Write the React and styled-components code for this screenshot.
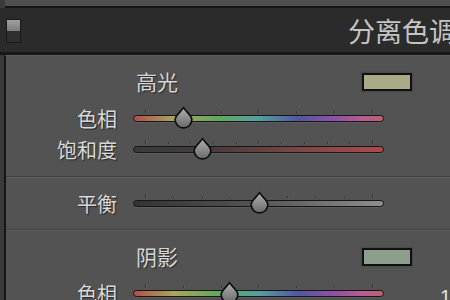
import React from 'react'
import styled, { createGlobalStyle } from 'styled-components'

const GlobalStyle = createGlobalStyle`
  html, body {
    margin: 0;
    padding: 0;
    background: #3a3a3a;
  }
  body {
    font-family: "Noto Sans CJK SC", "Noto Sans", sans-serif;
  }
`

const Screen = styled.div`
  width: 450px;
  height: 300px;
  overflow: hidden;
  background: #3a3a3a;
  display: flex;
  flex-direction: column;
`

const TopStrip = styled.div`
  height: 6px;
  margin-left: 5px;
  background: #4f4f4f;
  border-bottom: 2px solid #151515;
  flex-shrink: 0;
`

const Header = styled.header`
  height: 44px;
  flex-shrink: 0;
  display: flex;
  align-items: center;
  padding-left: 6px;
  background: #2b2b2b;
  border-bottom: 3px solid #181818;
`

const Toggle = styled.div`
  width: 13px;
  height: 22px;
  border: 1px solid #1a1a1a;
  display: flex;
  flex-direction: column;
  margin-top: 2px;
  & > span:first-child {
    flex: 1;
    background: linear-gradient(#a0a0a0, #7c7c7c);
  }
  & > span:last-child {
    flex: 1;
    background: #2f2f2f;
  }
`

const Title = styled.h1`
  margin: 0 -6px 0 auto;
  flex-shrink: 0;
  white-space: nowrap;
  font-size: 27px;
  font-weight: 400;
  color: #c4c4c4;
`

const Panel = styled.main`
  flex: 1;
  margin-left: 4px;
  background: #535353;
  border-left: 2px solid #161616;
  border-top: 1px solid #5c5c5c;
`

const Section = styled.section`
  padding: ${p => p.$top}px 0 ${p => p.$bottom}px;
  border-bottom: ${p => (p.$last ? 'none' : '1px solid #414141')};
  box-shadow: ${p => (p.$last ? 'none' : '0 1px 0 #5e5e5e')};
  margin-bottom: ${p => (p.$last ? 0 : 1)}px;
`

const HeadRow = styled.div`
  height: 24px;
  display: flex;
  align-items: center;
  padding-left: 130px;
  margin-bottom: 10px;
`

const Heading = styled.h2`
  margin: 0;
  font-size: 21px;
  font-weight: 400;
  color: #d6d6d6;
  text-shadow: 1px 1px 1px #2a2a2a;
`

const Swatch = styled.div`
  width: 46px;
  height: 14px;
  margin: 2px 38px 0 auto;
  background: ${p => p.$color};
  border: 2px solid #111;
  box-shadow: 0 0 1px 1px #4a4a4a;
`

const Row = styled.div`
  height: 31px;
  display: grid;
  grid-template-columns: 111px 251px 1fr;
  column-gap: 16px;
  align-items: center;
`

const Label = styled.span`
  text-align: right;
  font-size: 20px;
  color: #d8d8d8;
  text-shadow: 1px 1px 1px #262626;
  line-height: 1;
`

const Value = styled.span`
  padding-left: 40px;
  font-family: "Liberation Sans", sans-serif;
  font-size: 20px;
  color: #e0e0e0;
  line-height: 1;
  margin-top: 6px;
`

const SliderBox = styled.div`
  position: relative;
  height: 31px;
  display: flex;
  flex-direction: column;
  justify-content: center;
`

const Ticks = styled.div`
  height: 4px;
  display: flex;
  justify-content: space-between;
  align-items: flex-end;
  padding: 0 11px 0 12px;
  margin-bottom: 2px;
  margin-top: -6px;
`

const Tick = styled.i`
  width: 1px;
  height: ${p => (p.$major ? 4 : 2)}px;
  background: #363636;
  box-shadow: 1px 0 0 #5f5f5f;
`

const Track = styled.div`
  height: 5px;
  border: 1px solid #161616;
  border-radius: 4px;
  background: ${p => p.$fill};
  box-shadow: 0 1px 0 #5d5d5d;
`

const Thumb = styled.svg`
  position: absolute;
  top: 3px;
  width: 21px;
  height: 23px;
  margin-left: -10.5px;
  overflow: visible;
`

const fills = {
  hue: 'linear-gradient(90deg, hsl(0,38%,50%) 0%, hsl(55,32%,52%) 16%, hsl(120,30%,52%) 34%, hsl(180,30%,48%) 50%, hsl(235,34%,48%) 66%, hsl(285,34%,48%) 80%, hsl(325,38%,54%) 92%, hsl(350,42%,56%) 100%)',
  sat: 'linear-gradient(90deg, #3b3b3b 0%, #463b3b 30%, #844646 70%, #ad4a4a 100%)',
  bal: 'linear-gradient(90deg, #333 0%, #555 50%, #8e8e8e 100%)'
}

function Slider ({ kind, ticks, value }) {
  const marks = Array.from({ length: ticks }, (_, i) => i)
  const mid = (ticks - 1) / 2
  const left = 12 + value * 228
  return (
    <SliderBox>
      <Ticks>
        {marks.map(i => (
          <Tick key={i} $major={i === 0 || i === ticks - 1 || i === mid} />
        ))}
      </Ticks>
      <Track $fill={fills[kind]} />
      <Thumb viewBox='0 0 20 22' style={{ left }}>
        <defs>
          <linearGradient id='thumbFill' x1='0' y1='0' x2='0' y2='1'>
            <stop offset='0' stopColor='#b0b0b0' />
            <stop offset='1' stopColor='#6a6a6a' />
          </linearGradient>
        </defs>
        <path
          d='M10 1.5 C12 5 18 9 18 13 A8 8 0 0 1 2 13 C2 9 8 5 10 1.5 Z'
          fill='url(#thumbFill)'
          stroke='#0e0e0e'
          strokeWidth='1.6'
          strokeLinejoin='round'
        />
      </Thumb>
    </SliderBox>
  )
}

function SliderRow ({ label, kind, ticks, value, readout }) {
  return (
    <Row>
      <Label>{label}</Label>
      <Slider kind={kind} ticks={ticks} value={value} />
      {readout ? <Value>{readout}</Value> : <span />}
    </Row>
  )
}

export default function App () {
  return (
    <Screen>
      <GlobalStyle />
      <TopStrip />
      <Header>
        <Toggle><span /><span /></Toggle>
        <Title>分离色调</Title>
      </Header>
      <Panel>
        <Section $top={13} $bottom={11}>
          <HeadRow>
            <Heading>高光</Heading>
            <Swatch $color='#aaaa86' />
          </HeadRow>
          <SliderRow label='色相' kind='hue' ticks={7} value={0.17} />
          <SliderRow label='饱和度' kind='sat' ticks={11} value={0.25} />
        </Section>
        <Section $top={10} $bottom={10}>
          <SliderRow label='平衡' kind='bal' ticks={9} value={0.5} />
        </Section>
        <Section $top={13} $bottom={0} $last>
          <HeadRow>
            <Heading>阴影</Heading>
            <Swatch $color='#8d9e8d' />
          </HeadRow>
          <SliderRow label='色相' kind='hue' ticks={7} value={0.37} readout='1' />
        </Section>
      </Panel>
    </Screen>
  )
}
